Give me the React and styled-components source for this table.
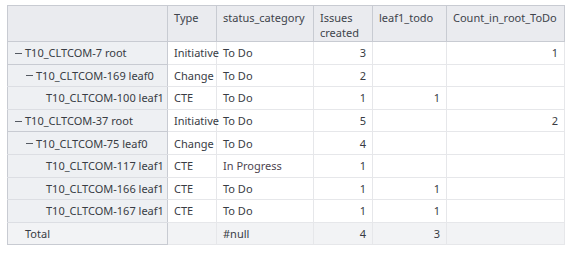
import React from 'react';
import styled, { createGlobalStyle } from 'styled-components';

const GlobalStyle = createGlobalStyle`
  body {
    margin: 0;
    background: #ffffff;
    font-family: "Segoe UI", "Noto Sans", Arial, sans-serif;
  }
`;

const Page = styled.div`
  padding: 5px 0 0 7px;
`;

const Table = styled.table`
  border-collapse: collapse;
  table-layout: fixed;
  width: 557px;
  font-size: 11px;
  color: #383c44;
  border: 1px solid #c8cbd2;
`;

const HeadCell = styled.th`
  background: #eaebef;
  border: 1px solid #c8cbd2;
  height: 31px;
  padding: 4px 6px 0;
  vertical-align: top;
  text-align: left;
  font-weight: normal;
  line-height: 15px;
  color: #40444c;
`;

const RowHead = styled.td`
  background: ${(p) => (p.$total ? '#f2f3f5' : '#eef0f3')};
  border-right: 1px solid #c8cbd2;
  border-bottom: 1px solid ${(p) => (p.$top ? '#c8cbd2' : '#dcdee3')};
  border-top: 1px solid ${(p) => (p.$top ? '#c8cbd2' : '#dcdee3')};
  height: 21.6px;
  padding: 0 0 0 ${(p) => p.$indent}px;
  white-space: nowrap;
  vertical-align: middle;
`;

const Cell = styled.td`
  background: ${(p) => (p.$total ? '#f2f3f5' : '#ffffff')};
  border: 1px solid #e6e7ea;
  border-top-color: ${(p) => (p.$top ? '#d4d6db' : '#e6e7ea')};
  height: 21.6px;
  padding: 0 6px;
  text-align: ${(p) => (p.$num ? 'right' : 'left')};
  vertical-align: middle;
  white-space: nowrap;
  color: ${(p) => (p.$progress ? '#4e4550' : '#383c44')};
`;

const Dash = styled.span`
  display: inline-block;
  width: 7px;
  height: 1px;
  background: #555a62;
  vertical-align: middle;
  margin: 0 3px 2px 0;
`;

const rows = [
  { name: 'T10_CLTCOM-7 root', level: 0, toggle: true, type: 'Initiative', status: 'To Do', issues: 3, leaf: '', count: 1, top: true },
  { name: 'T10_CLTCOM-169 leaf0', level: 1, toggle: true, type: 'Change', status: 'To Do', issues: 2, leaf: '', count: '' },
  { name: 'T10_CLTCOM-100 leaf1', level: 2, type: 'CTE', status: 'To Do', issues: 1, leaf: 1, count: '' },
  { name: 'T10_CLTCOM-37 root', level: 0, toggle: true, type: 'Initiative', status: 'To Do', issues: 5, leaf: '', count: 2, top: true },
  { name: 'T10_CLTCOM-75 leaf0', level: 1, toggle: true, type: 'Change', status: 'To Do', issues: 4, leaf: '', count: '' },
  { name: 'T10_CLTCOM-117 leaf1', level: 2, type: 'CTE', status: 'In Progress', issues: 1, leaf: '', count: '' },
  { name: 'T10_CLTCOM-166 leaf1', level: 2, type: 'CTE', status: 'To Do', issues: 1, leaf: 1, count: '' },
  { name: 'T10_CLTCOM-167 leaf1', level: 2, type: 'CTE', status: 'To Do', issues: 1, leaf: 1, count: '' },
];

const indentFor = (r) => (r.toggle ? 7 + r.level * 11 : 38);

export default function App() {
  return (
    <Page>
      <GlobalStyle />
      <Table>
        <colgroup>
          <col style={{ width: 160 }} />
          <col style={{ width: 49 }} />
          <col style={{ width: 97 }} />
          <col style={{ width: 59 }} />
          <col style={{ width: 74 }} />
          <col style={{ width: 118 }} />
        </colgroup>
        <thead>
          <tr>
            <HeadCell />
            <HeadCell>Type</HeadCell>
            <HeadCell>status_category</HeadCell>
            <HeadCell>Issues<br />created</HeadCell>
            <HeadCell>leaf1_todo</HeadCell>
            <HeadCell>Count_in_root_ToDo</HeadCell>
          </tr>
        </thead>
        <tbody>
          {rows.map((r) => (
            <tr key={r.name}>
              <RowHead $indent={indentFor(r)} $top={r.top}>
                {r.toggle && <Dash />}
                {r.name}
              </RowHead>
              <Cell $top={r.top}>{r.type}</Cell>
              <Cell $top={r.top} $progress={r.status === 'In Progress'}>{r.status}</Cell>
              <Cell $top={r.top} $num>{r.issues}</Cell>
              <Cell $top={r.top} $num>{r.leaf}</Cell>
              <Cell $top={r.top} $num>{r.count}</Cell>
            </tr>
          ))}
          <tr>
            <RowHead $indent={17} $total $top>Total</RowHead>
            <Cell $total $top />
            <Cell $total $top>#null</Cell>
            <Cell $total $top $num>4</Cell>
            <Cell $total $top $num>3</Cell>
            <Cell $total $top />
          </tr>
        </tbody>
      </Table>
    </Page>
  );
}
